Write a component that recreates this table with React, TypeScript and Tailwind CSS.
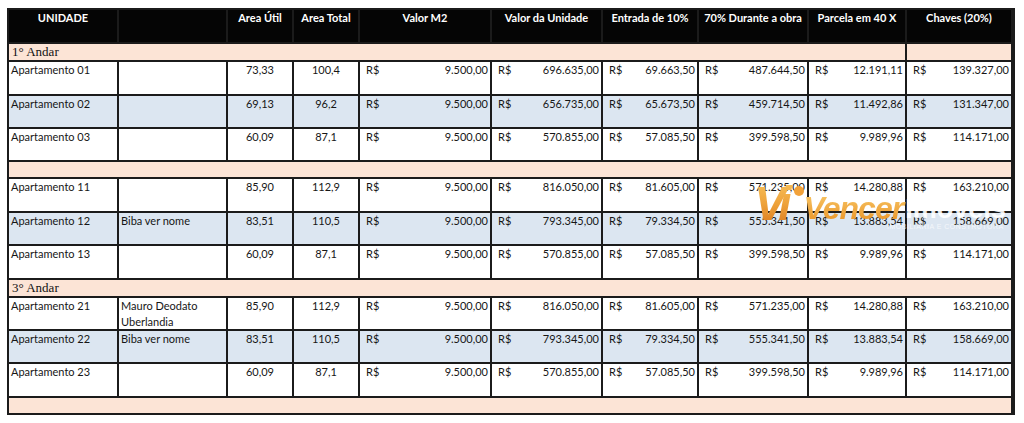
import React from "react";

type Unit = {
  name: string;
  owner: string;
  util: string;
  total: string;
  m2: string;
  valor: string;
  entrada: string;
  obra: string;
  parcela: string;
  chaves: string;
  blue?: boolean;
};

type Row =
  | { kind: "floor"; label: string; split?: boolean }
  | { kind: "unit"; unit: Unit };

const rows: Row[] = [
  { kind: "floor", label: "1° Andar", split: true },
  { kind: "unit", unit: { name: "Apartamento 01", owner: "", util: "73,33", total: "100,4", m2: "9.500,00", valor: "696.635,00", entrada: "69.663,50", obra: "487.644,50", parcela: "12.191,11", chaves: "139.327,00" } },
  { kind: "unit", unit: { name: "Apartamento 02", owner: "", util: "69,13", total: "96,2", m2: "9.500,00", valor: "656.735,00", entrada: "65.673,50", obra: "459.714,50", parcela: "11.492,86", chaves: "131.347,00", blue: true } },
  { kind: "unit", unit: { name: "Apartamento 03", owner: "", util: "60,09", total: "87,1", m2: "9.500,00", valor: "570.855,00", entrada: "57.085,50", obra: "399.598,50", parcela: "9.989,96", chaves: "114.171,00" } },
  { kind: "floor", label: "" },
  { kind: "unit", unit: { name: "Apartamento 11", owner: "", util: "85,90", total: "112,9", m2: "9.500,00", valor: "816.050,00", entrada: "81.605,00", obra: "571.235,00", parcela: "14.280,88", chaves: "163.210,00" } },
  { kind: "unit", unit: { name: "Apartamento 12", owner: "Biba ver nome", util: "83,51", total: "110,5", m2: "9.500,00", valor: "793.345,00", entrada: "79.334,50", obra: "555.341,50", parcela: "13.883,54", chaves: "158.669,00", blue: true } },
  { kind: "unit", unit: { name: "Apartamento 13", owner: "", util: "60,09", total: "87,1", m2: "9.500,00", valor: "570.855,00", entrada: "57.085,50", obra: "399.598,50", parcela: "9.989,96", chaves: "114.171,00" } },
  { kind: "floor", label: "3° Andar" },
  { kind: "unit", unit: { name: "Apartamento 21", owner: "Mauro Deodato Uberlandia", util: "85,90", total: "112,9", m2: "9.500,00", valor: "816.050,00", entrada: "81.605,00", obra: "571.235,00", parcela: "14.280,88", chaves: "163.210,00" } },
  { kind: "unit", unit: { name: "Apartamento 22", owner: "Biba ver nome", util: "83,51", total: "110,5", m2: "9.500,00", valor: "793.345,00", entrada: "79.334,50", obra: "555.341,50", parcela: "13.883,54", chaves: "158.669,00", blue: true } },
  { kind: "unit", unit: { name: "Apartamento 23", owner: "", util: "60,09", total: "87,1", m2: "9.500,00", valor: "570.855,00", entrada: "57.085,50", obra: "399.598,50", parcela: "9.989,96", chaves: "114.171,00" } },
  { kind: "floor", label: "" },
];

const headers = [
  "UNIDADE",
  "",
  "Area Útil",
  "Area Total",
  "Valor M2",
  "Valor da Unidade",
  "Entrada de 10%",
  "70% Durante a obra",
  "Parcela em 40 X",
  "Chaves (20%)",
];

function Money({ value, bg }: { value: string; bg: string }) {
  return (
    <div className={`${bg} flex justify-between pl-[6px] pr-[2px]`}>
      <span>R$</span>
      <span>{value}</span>
    </div>
  );
}

function UnitCells({ unit }: { unit: Unit }) {
  const bg = unit.blue ? "bg-[#dce6f1]" : "bg-white";
  return (
    <>
      <div className={`${bg} pl-[2px] whitespace-nowrap`}>{unit.name}</div>
      <div className={`${bg} pl-[2px] pr-[4px]`}>{unit.owner}</div>
      <div className={`${bg} text-center`}>{unit.util}</div>
      <div className={`${bg} text-center`}>{unit.total}</div>
      <Money value={unit.m2} bg={bg} />
      <Money value={unit.valor} bg={bg} />
      <Money value={unit.entrada} bg={bg} />
      <Money value={unit.obra} bg={bg} />
      <Money value={unit.parcela} bg={bg} />
      <Money value={unit.chaves} bg={bg} />
    </>
  );
}

// logo stamped over the table, like in the source image
function Watermark() {
  return (
    <div className="absolute left-[752px] top-[180px] flex items-start pointer-events-none select-none font-['Liberation_Sans',sans-serif]">
      <div className="relative">
        <span className="block pl-[2px] pr-[12px] text-[48px] leading-[48px] font-bold italic tracking-[-6px] bg-linear-to-b from-[#f7c15a] via-[#eea23a] to-[#d9781c] bg-clip-text text-transparent">
          Vi
        </span>
        <span className="absolute left-[42px] top-[6px] w-[10px] h-[10px] rounded-full bg-[#f2a23a]" />
      </div>
      <div className="ml-[6px] mt-[12px] flex flex-col">
        <div className="flex items-end">
          <span className="pr-[6px] text-[32px] leading-[32px] font-bold italic tracking-[-1px] bg-linear-to-b from-[#f8c866] to-[#e8921f] bg-clip-text text-transparent">
            Vencer
          </span>
          <span className="-ml-[4px] text-[27px] leading-[30px] font-bold text-white/90">
            Imóveis
          </span>
        </div>
        <span className="self-end -mt-[1px] text-[7px] leading-[8px] tracking-[0.5px] text-white/70 mr-[2px]">
          IMOBILIÁRIA E CONSTRUTORA
        </span>
      </div>
    </div>
  );
}

export default function App() {
  return (
    <div className="relative w-[1024px] h-[423px] bg-white overflow-hidden pt-[8px] pl-[7px]">
      <div className="grid w-[1008px] gap-[2px] p-[2px] bg-[#1b1b1b] text-[11px] leading-[16px] text-[#161616] font-['Lato','Open_Sans',sans-serif] grid-cols-[108px_107px_64px_64px_130px_109px_94px_108px_96px_104px] grid-rows-[32px_16px_32px_31px_31px_15px_32px_31px_32px_16px_31px_31px_32px_15px]">
        {headers.map((h, i) => (
          <div
            key={i}
            className="bg-[#050505] text-white font-bold text-center whitespace-nowrap"
          >
            {h}
          </div>
        ))}
        {rows.map((row, i) => {
          if (row.kind === "floor") {
            if (row.split) {
              return (
                <React.Fragment key={i}>
                  <div className="col-span-9 bg-[#fce4d6] pl-[3px] text-[13px] leading-[16px] text-[#111] font-['Liberation_Serif',serif]">
                    {row.label}
                  </div>
                  <div className="bg-[#fce4d6]" />
                </React.Fragment>
              );
            }
            return (
              <div
                key={i}
                className="col-span-10 bg-[#fce4d6] pl-[3px] text-[13px] leading-[16px] text-[#111] font-['Liberation_Serif',serif]"
              >
                {row.label}
              </div>
            );
          }
          return <UnitCells key={i} unit={row.unit} />;
        })}
      </div>
      <Watermark />
    </div>
  );
}
